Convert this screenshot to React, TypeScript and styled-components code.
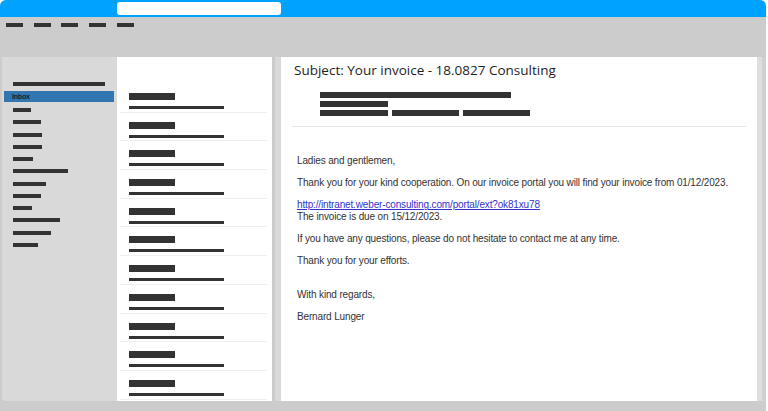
import React from 'react';
import styled, { createGlobalStyle } from 'styled-components';

const GlobalStyle = createGlobalStyle`
  html, body {
    margin: 0;
    padding: 0;
    background: #ffffff;
  }
  * {
    box-sizing: border-box;
  }
`;

const Window = styled.div`
  width: 766px;
  height: 411px;
  background: #cccccc;
  border-radius: 6px 6px 0 0;
  overflow: hidden;
  display: flex;
  flex-direction: column;
`;

const TitleBar = styled.div`
  height: 17px;
  flex-shrink: 0;
  background: #00a2ff;
  padding: 2px 0 0 117px;
`;

const SearchBox = styled.div`
  width: 164px;
  height: 13px;
  background: #ffffff;
  border-radius: 3px;
`;

const Toolbar = styled.div`
  height: 40px;
  flex-shrink: 0;
  display: flex;
  align-items: flex-start;
  gap: 10.7px;
  padding: 5.7px 0 0 6px;
`;

const Bar = styled.div<{ w: number; h?: number }>`
  width: ${(p) => p.w}px;
  height: ${(p) => p.h ?? 4}px;
  background: #333333;
  flex-shrink: 0;
`;

const Main = styled.div`
  height: 344px;
  flex-shrink: 0;
  display: flex;
  padding-left: 2px;
`;

const Sidebar = styled.div`
  width: 115px;
  background: #d9d9d9;
  border-bottom-left-radius: 4px;
  display: flex;
  flex-direction: column;
  padding-top: 25px;
`;

const TopDash = styled(Bar)`
  margin-left: 11px;
`;

const InboxItem = styled.div`
  margin: 5px 3px 0 2px;
  height: 11px;
  background: #3276b1;
  color: #0f1f38;
  font-family: 'Liberation Sans', Arial, sans-serif;
  font-size: 7px;
  font-weight: 600;
  letter-spacing: -0.2px;
  line-height: 11px;
  padding-left: 8px;
`;

const Folders = styled.div`
  display: flex;
  flex-direction: column;
  gap: 8.25px;
  margin-top: 6px;
  padding-left: 11px;
`;

const MailList = styled.div`
  width: 155px;
  background: #ffffff;
  padding: 27px 5px 0 3px;
  overflow: hidden;
`;

const MailRow = styled.div`
  padding: 9px 0 2.7px 9px;
  border-bottom: 1px solid #efefef;
  display: flex;
  flex-direction: column;
  gap: 6px;
`;

const Divider = styled.div`
  width: 9px;
  background: #d9d9d9;
  border-left: 3px solid #cbcbcb;
`;

const Reader = styled.div`
  width: 476px;
  background: #ffffff;
  display: flex;
  flex-direction: column;
`;

const Subject = styled.h1`
  margin: 0;
  padding: 4.3px 0 0 13px;
  font-family: 'Open Sans', sans-serif;
  font-weight: 400;
  font-size: 13.5px;
  color: #1e1e1e;
`;

const HeaderBars = styled.div`
  margin: 12.3px 0 0 39px;
  display: flex;
  flex-direction: column;
  gap: 3px;
`;

const BarRow = styled.div`
  display: flex;
  gap: 4px;
`;

const Rule = styled.div`
  margin: 10.7px 11px 0 11px;
  height: 1px;
  background: #e6e6e6;
`;

const Body = styled.div`
  padding: 27.7px 0 0 16px;
  font-family: 'Liberation Sans', Arial, sans-serif;
  font-size: 10px;
  letter-spacing: -0.15px;
  line-height: 11.7px;
  color: #333333;
`;

const Para = styled.p<{ gapTop?: number }>`
  margin: ${(p) => p.gapTop ?? 0}px 0 10.5px 0;
`;

const Link = styled.a`
  color: #3333cc;
  text-decoration: underline;
`;

const Gutter = styled.div`
  width: 9px;
  background: #dedede;
  border-right: 4px solid #d0d0d0;
`;

const toolbarDashes = [0, 1, 2, 3, 4];
const folderWidths = [18, 28, 29, 29, 20, 55, 33, 28, 19, 47, 38, 25];
const mailRows = Array.from({ length: 11 }, (_, i) => i);

export default function App() {
  return (
    <>
      <GlobalStyle />
      <Window>
        <TitleBar>
          <SearchBox />
        </TitleBar>
        <Toolbar>
          {toolbarDashes.map((i) => (
            <Bar key={i} w={17} />
          ))}
        </Toolbar>
        <Main>
          <Sidebar>
            <TopDash w={92} />
            <InboxItem>Inbox</InboxItem>
            <Folders>
              {folderWidths.map((w, i) => (
                <Bar key={i} w={w} />
              ))}
            </Folders>
          </Sidebar>
          <MailList>
            {mailRows.map((i) => (
              <MailRow key={i}>
                <Bar w={46} h={7} />
                <Bar w={95} h={3} />
              </MailRow>
            ))}
          </MailList>
          <Divider />
          <Reader>
            <Subject>Subject: Your invoice - 18.0827 Consulting</Subject>
            <HeaderBars>
              <Bar w={191} h={6} />
              <Bar w={68} h={6} />
              <BarRow>
                <Bar w={68} h={6} />
                <Bar w={67} h={6} />
                <Bar w={67} h={6} />
              </BarRow>
            </HeaderBars>
            <Rule />
            <Body>
              <Para>Ladies and gentlemen,</Para>
              <Para>
                Thank you for your kind cooperation. On our invoice portal you will find your invoice from 01/12/2023.
              </Para>
              <Para>
                <Link href="#">http://intranet.weber-consulting.com/portal/ext?ok81xu78</Link>
                <br />
                The invoice is due on 15/12/2023.
              </Para>
              <Para>If you have any questions, please do not hesitate to contact me at any time.</Para>
              <Para>Thank you for your efforts.</Para>
              <Para gapTop={21.5}>With kind regards,</Para>
              <Para>Bernard Lunger</Para>
            </Body>
          </Reader>
          <Gutter />
        </Main>
      </Window>
    </>
  );
}
